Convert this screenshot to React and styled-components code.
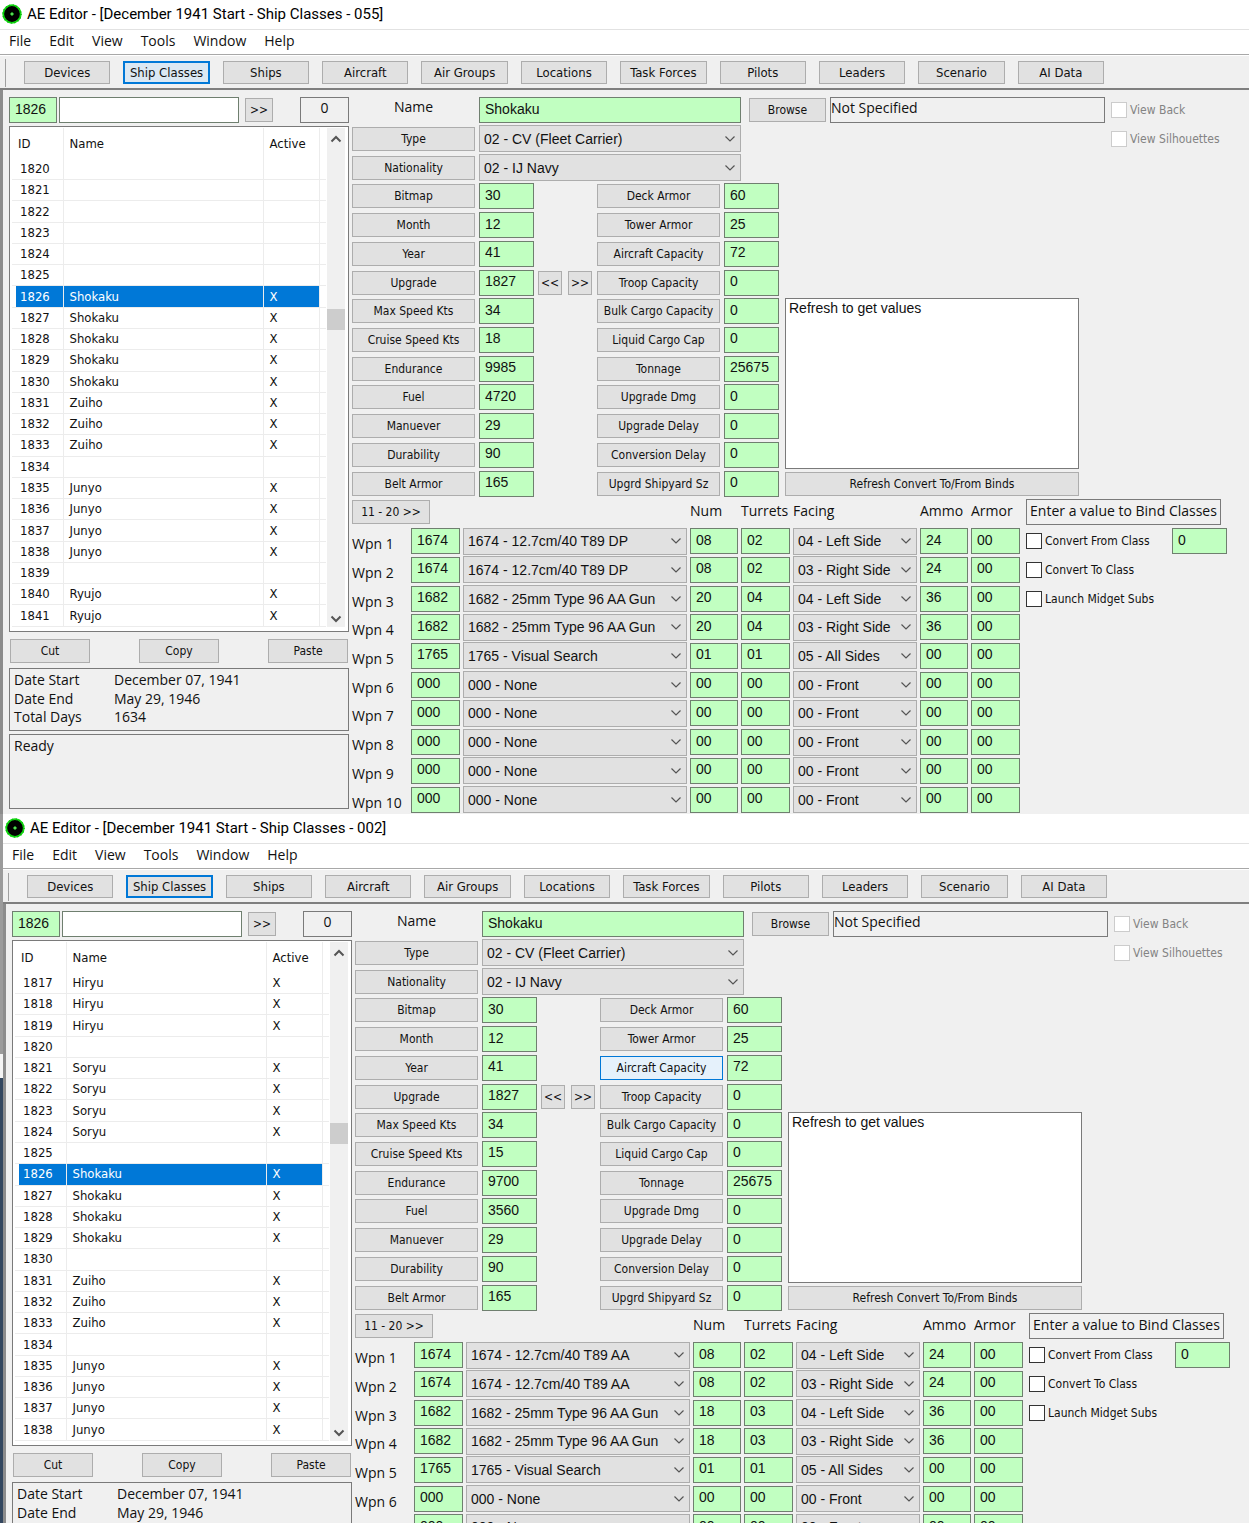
// ------------------------------
// File: App.jsx
// ------------------------------
// Description: Two scenario editor windows, stacked, each showing a ship class.
// ------------------------------

// ------------------------------
// Imports
// ------------------------------
import { Fragment, useId } from 'react';
import styled, { createGlobalStyle } from 'styled-components';

// ------------------------------
// Data
// ------------------------------
const menus = ['File', 'Edit', 'View', 'Tools', 'Window', 'Help'];

const tabs = [
  'Devices',
  'Ship Classes',
  'Ships',
  'Aircraft',
  'Air Groups',
  'Locations',
  'Task Forces',
  'Pilots',
  'Leaders',
  'Scenario',
  'AI Data',
];

// Builds the list rows from the first ID and the names that follow it.
function buildShips(firstId, names) {
  return names.map((name, index) => ({ id: firstId + index, name }));
}

const emptyWeapon = ['000', '000 - None', '00', '00', '00 - Front', '00', '00'];

function buildWeapons(gun, count, turrets) {
  return [
    ['1674', gun, '08', '02', '04 - Left Side', '24', '00'],
    ['1674', gun, '08', '02', '03 - Right Side', '24', '00'],
    ['1682', '1682 - 25mm Type 96 AA Gun', count, turrets, '04 - Left Side', '36', '00'],
    ['1682', '1682 - 25mm Type 96 AA Gun', count, turrets, '03 - Right Side', '36', '00'],
    ['1765', '1765 - Visual Search', '01', '01', '05 - All Sides', '00', '00'],
    emptyWeapon,
    emptyWeapon,
    emptyWeapon,
    emptyWeapon,
    emptyWeapon,
  ];
}

function buildStats(cruise, endurance, fuel) {
  return [
    ['Bitmap', '30', 'Deck Armor', '60'],
    ['Month', '12', 'Tower Armor', '25'],
    ['Year', '41', 'Aircraft Capacity', '72'],
    ['Upgrade', '1827', 'Troop Capacity', '0'],
    ['Max Speed Kts', '34', 'Bulk Cargo Capacity', '0'],
    ['Cruise Speed Kts', cruise, 'Liquid Cargo Cap', '0'],
    ['Endurance', endurance, 'Tonnage', '25675'],
    ['Fuel', fuel, 'Upgrade Dmg', '0'],
    ['Manuever', '29', 'Upgrade Delay', '0'],
    ['Durability', '90', 'Conversion Delay', '0'],
    ['Belt Armor', '165', 'Upgrd Shipyard Sz', '0'],
  ];
}

const first = {
  title: 'AE Editor - [December 1941 Start - Ship Classes - 055]',
  ships: buildShips(1820, [
    '', '', '', '', '', '',
    'Shokaku', 'Shokaku', 'Shokaku', 'Shokaku', 'Shokaku',
    'Zuiho', 'Zuiho', 'Zuiho', '',
    'Junyo', 'Junyo', 'Junyo', 'Junyo', '',
    'Ryujo', 'Ryujo',
  ]),
  stats: buildStats('18', '9985', '4720'),
  weapons: buildWeapons('1674 - 12.7cm/40 T89 DP', '20', '04'),
  tabHot: true,
};

const second = {
  title: 'AE Editor - [December 1941 Start - Ship Classes - 002]',
  ships: buildShips(1817, [
    'Hiryu', 'Hiryu', 'Hiryu', '',
    'Soryu', 'Soryu', 'Soryu', 'Soryu', '',
    'Shokaku', 'Shokaku', 'Shokaku', 'Shokaku', '',
    'Zuiho', 'Zuiho', 'Zuiho', '',
    'Junyo', 'Junyo', 'Junyo', 'Junyo',
  ]),
  stats: buildStats('15', '9700', '3560'),
  weapons: buildWeapons('1674 - 12.7cm/40 T89 AA', '18', '03'),
  hotButton: 'Aircraft Capacity',
};

// ------------------------------
// Styled Components
// ------------------------------
const GlobalStyle = createGlobalStyle`
  :root {
    --font-title: Roboto, 'Open Sans', sans-serif;
    --font-menu: 'Open Sans', 'Noto Sans', sans-serif;
    --font-ui: 'DejaVu Sans Condensed', 'DejaVu Sans', sans-serif;
    --font-field: 'Liberation Sans', Arial, sans-serif;
    --font-note: 'Comic Sans MS', 'Open Sans', sans-serif;
    --color-face: #f0f0f0;
    --color-button: #e1e1e1;
    --color-edge: #adadad;
    --color-frame: #7a7a7a;
    --color-field: #c1ffc1;
    --color-accent: #0078d7;
  }

  * {
    box-sizing: border-box;
  }

  body {
    margin: 0;
    background: #fff;
    color: #111;
  }

  button,
  input,
  select,
  textarea {
    margin: 0;
    border-radius: 0;
    color: inherit;
  }
`;

const Desktop = styled.div`
  display: flex;
  flex-direction: column;
  height: 100vh;
  overflow: hidden;
`;

const LowerRow = styled.div`
  display: flex;
  flex: 1;
  min-height: 0;
  overflow: hidden;
`;

const Backdrop = styled.div`
  flex: 0 0 3px;
  background: linear-gradient(
    #9b9b9b 240px,
    #f4f4f4 240px,
    #f4f4f4 264px,
    #33475f 264px
  );
`;

const StyledWindow = styled.section`
  flex: none;
  align-self: flex-start;
  width: 100%;
  min-width: 0;
  background: var(--color-face);

  ${LowerRow} & {
    flex: 1 1 0;
  }
`;

const TitleBar = styled.header`
  display: flex;
  align-items: center;
  gap: 5px;
  height: 29px;
  padding: 0 0 1px 2px;
  background: #fff;
  font: 15px/20px var(--font-title);
  color: #000;
`;

const Title = styled.h1`
  margin: 0;
  font: inherit;
  white-space: nowrap;
`;

const MenuBar = styled.nav`
  display: flex;
  align-items: center;
  gap: 18px;
  height: 26px;
  padding: 0 0 2px 9px;
  border-top: 1px solid #e2e2e2;
  border-bottom: 1px solid #a8a8a8;
  background: #fff;
`;

const MenuItem = styled.button`
  padding: 0;
  border: 0;
  background: none;
  font: 14px/18px var(--font-menu);
`;

const ToolBar = styled.div`
  display: flex;
  align-items: center;
  height: 35px;
  padding: 1px 0 0 5px;
  border-top: 1px solid #fff;
  border-bottom: 2px solid #7f7f7f;
`;

const Grip = styled.span`
  width: 1px;
  height: 28px;
  margin-right: 18px;
  background: #a0a0a0;
`;

const TabGrid = styled.div`
  display: grid;
  grid-template-columns: repeat(11, 1fr);
  gap: 13px;
  flex: 0 1 1080px;
`;

const Tab = styled.button`
  height: 23px;
  padding: 0;
  border: ${({ $active }) =>
    $active ? '2px solid var(--color-accent)' : '1px solid var(--color-edge)'};
  background: ${({ $hot }) => ($hot ? '#dbe8f3' : 'var(--color-button)')};
  font: 13px/16px var(--font-ui);
  white-space: nowrap;
`;

const Client = styled.div`
  display: flex;
  gap: 3px;
  padding: 6px 0 0 6px;
  border-left: 3px solid #8c8c8c;
`;

const Sidebar = styled.div`
  display: flex;
  flex-direction: column;
  flex: 0 0 340px;
  min-width: 0;
  padding: 1px 0 5px;
`;

const FindRow = styled.div`
  display: flex;
  align-items: center;
  gap: 2px;
  margin-bottom: 3px;
`;

const Button = styled.button`
  width: ${({ $width }) => ($width ? `${$width}px` : '100%')};
  height: 24px;
  padding: 0;
  border: 1px solid ${({ $hot }) => ($hot ? 'var(--color-accent)' : 'var(--color-edge)')};
  background: ${({ $hot }) => ($hot ? '#e5f1fb' : 'var(--color-button)')};
  font: 12px/16px var(--font-ui);
  white-space: nowrap;
`;

const FindButton = styled(Button)`
  margin: 0 auto 0 4px;
`;

const Field = styled.input`
  width: ${({ $width }) => ($width ? `${$width}px` : '100%')};
  height: 26px;
  padding: 0 5px 3px;
  border: 1px solid #6f7f6f;
  background: ${({ $plain }) => ($plain ? '#fff' : 'var(--color-field)')};
  font: 14px/18px var(--font-field);
`;

const Counter = styled.output`
  width: 49px;
  height: 26px;
  border: 1px solid var(--color-frame);
  font: 14px/20px var(--font-note);
  text-align: center;
`;

const ListBox = styled.div`
  display: flex;
  justify-content: space-between;
  height: 506px;
  padding: 1px 3px 4px 2px;
  border: 1px solid var(--color-frame);
  background: #fff;
`;

const ShipTable = styled.table`
  width: 314px;
  height: 499px;
  border-collapse: collapse;
  table-layout: fixed;
  font: 13px/16px var(--font-ui);

  th,
  td {
    padding: 0 0 0 6px;
    border-right: 1px solid #ececec;
    text-align: left;
    font-weight: normal;
  }

  th:last-child,
  td:last-child {
    border-right: 0;
  }
`;

const HeadRow = styled.tr`
  height: 31px;
`;

const ShipRow = styled.tr`
  border-bottom: 1px solid #ececec;

  td:not(:last-child) {
    background: ${({ $selected }) => ($selected ? 'var(--color-accent)' : 'none')};
    color: ${({ $selected }) => ($selected ? '#fff' : 'inherit')};
  }

  td:first-child {
    padding-left: 8px;
    background-image: linear-gradient(90deg, #fff 4px, transparent 4px);
  }
`;

const ScrollBar = styled.div`
  display: flex;
  flex-direction: column;
  align-items: center;
  justify-content: space-between;
  width: 18px;
  padding: 7px 0 4px;
  background: var(--color-face);
`;

const Thumb = styled.span`
  width: 18px;
  height: 21px;
  margin-bottom: 120px;
  background: #cdcdcd;
`;

const EditRow = styled.div`
  display: flex;
  justify-content: space-between;
  padding: 7px 1px 5px;
`;

const InfoBox = styled.dl`
  display: grid;
  grid-template-columns: 100px 1fr;
  grid-auto-rows: 1fr;
  height: 63px;
  margin: 0 0 3px;
  padding: 2px 4px 3px;
  border: 1px solid var(--color-frame);
  font: 14px/18px var(--font-note);

  dd {
    margin: 0;
  }
`;

const StatusBox = styled.div`
  height: 75px;
  padding: 2px 4px;
  border: 1px solid var(--color-frame);
  font: 14px/18px var(--font-note);
`;

const Form = styled.div`
  flex: 1;
  min-width: 0;
`;

const HeadGrid = styled.div`
  display: grid;
  grid-template-columns: 123px 262px 81px 275px auto;
  grid-template-rows: repeat(3, 1fr);
  column-gap: 4px;
  align-items: center;
  height: 86px;
`;

const NameLabel = styled.label`
  padding-bottom: 6px;
  text-align: center;
  font: 14px/18px var(--font-note);
`;

const BrowseButton = styled(Button)`
  justify-self: end;
`;

const PathBox = styled.output`
  height: 26px;
  border: 1px solid var(--color-frame);
  font: 14px/20px var(--font-note);
`;

const CheckLabel = styled.label`
  display: flex;
  grid-column: ${({ $column }) => $column || 'auto'};
  align-items: center;
  gap: 3px;
  padding-left: ${({ $column }) => ($column ? '2px' : 0)};
  color: ${({ $muted }) => ($muted ? '#838383' : 'inherit')};
  font: 12px/16px var(--font-ui);
  white-space: nowrap;
`;

const CheckBox = styled.input`
  appearance: none;
  width: 16px;
  height: 16px;
  border: 1px solid #333;
  background: #fff;

  &:disabled {
    border-color: #ccc;
  }

  &:checked {
    background: var(--color-accent);
  }
`;

const SelectCell = styled.div`
  display: grid;
  align-items: center;

  select,
  svg {
    grid-area: 1 / 1;
  }

  svg {
    justify-self: end;
    margin-right: 5px;
    pointer-events: none;
  }
`;

const StyledSelect = styled.select`
  appearance: none;
  width: 100%;
  height: 27px;
  padding: 0 20px 0 4px;
  border: 1px solid var(--color-edge);
  background: var(--color-button);
  font: 14px/18px var(--font-field);
`;

const StatArea = styled.div`
  display: flex;
  gap: 6px;
  height: 316px;
`;

const StatGrid = styled.div`
  display: grid;
  grid-template-columns: 123px 55px 55px 123px 55px;
  grid-template-rows: repeat(11, 1fr);
  column-gap: 4px;
  align-items: center;
`;

const ArrowPair = styled.div`
  display: flex;
  gap: 6px;
`;

const ConvertPanel = styled.div`
  display: flex;
  flex-direction: column;
  justify-content: flex-end;
  gap: 3px;
  width: 294px;
  padding-bottom: 2px;
`;

const ConvertText = styled.textarea`
  height: 171px;
  padding: 0 3px;
  border: 1px solid var(--color-frame);
  background: #fff;
  font: 14px/18px var(--font-field);
  resize: none;
`;

const WeaponArea = styled.div`
  display: flex;
  gap: 6px;
  height: 316px;
`;

const WeaponGrid = styled.div`
  display: grid;
  grid-template-columns: 56px 49px 224px 48px 49px 124px 48px 49px;
  grid-template-rows: repeat(11, 1fr);
  column-gap: 3px;
  align-items: center;
  font: 14px/18px var(--font-note);
  white-space: nowrap;
`;

const PageCell = styled.div`
  grid-column: 1 / 4;
`;

const ColumnName = styled.span`
  padding-bottom: 3px;
`;

const WeaponName = styled.span`
  padding-top: 6px;
`;

const BindGrid = styled.div`
  display: grid;
  grid-template-rows: repeat(11, 1fr);
  align-items: center;
  width: 201px;
`;

const BindTitle = styled.div`
  width: 195px;
  height: 26px;
  border: 1px solid var(--color-frame);
  font: 14px/22px var(--font-note);
  text-align: center;
  white-space: nowrap;
`;

const BindRow = styled.div`
  display: flex;
  align-items: center;
  justify-content: space-between;
`;

// ------------------------------
// Components
// ------------------------------
function Logo() {
  return (
    <svg width="20" height="20" viewBox="0 0 20 20" aria-hidden="true">
      <circle cx="10" cy="10" r="8.800" fill="#000" stroke="#12e012" strokeWidth="1.800" />
      <circle cx="10" cy="10" r="8.800" fill="none" stroke="#0cb00c" strokeWidth="1.800" strokeDasharray="1 2.500" />
      <circle cx="10" cy="10" r="1.300" fill="#b8ffb8" stroke="#18b818" />
    </svg>
  );
}

function Chevron({ up, bold }) {
  return (
    <svg width="12" height="8" viewBox="0 0 12 8" aria-hidden="true">
      <path
        d={up ? 'M1.500 6.500 6 2l4.500 4.500' : 'M1.500 1.500 6 6l4.500-4.500'}
        fill="none"
        stroke="#555"
        strokeWidth={bold ? 2 : 1.2}
      />
    </svg>
  );
}

function Select({ value, label }) {
  return (
    <SelectCell>
      <StyledSelect aria-label={label} defaultValue={value}>
        <option>{value}</option>
      </StyledSelect>
      <Chevron />
    </SelectCell>
  );
}

function Check({ children, disabled, column }) {
  return (
    <CheckLabel $muted={disabled} $column={column}>
      <CheckBox type="checkbox" disabled={disabled} />
      {children}
    </CheckLabel>
  );
}

function ShipList({ ships }) {
  return (
    <ListBox>
      <ShipTable>
        <colgroup>
          <col width="51" />
          <col width="200" />
          <col width="56" />
          <col width="7" />
        </colgroup>
        <thead>
          <HeadRow>
            <th>ID</th>
            <th>Name</th>
            <th>Active</th>
            <th aria-hidden="true" />
          </HeadRow>
        </thead>
        <tbody>
          {ships.map(({ id, name }) => (
            <ShipRow key={id} $selected={id === 1826}>
              <td>{id}</td>
              <td>{name}</td>
              <td>{name && 'X'}</td>
              <td />
            </ShipRow>
          ))}
        </tbody>
      </ShipTable>
      <ScrollBar>
        <Chevron up bold />
        <Thumb />
        <Chevron bold />
      </ScrollBar>
    </ListBox>
  );
}

function SidePanel({ ships }) {
  return (
    <Sidebar>
      <FindRow>
        <Field $width={48} aria-label="Class ID" defaultValue="1826" />
        <Field $width={180} $plain aria-label="Find" />
        <FindButton $width={28}>&gt;&gt;</FindButton>
        <Counter>0</Counter>
      </FindRow>
      <ShipList ships={ships} />
      <EditRow>
        <Button $width={80}>Cut</Button>
        <Button $width={80}>Copy</Button>
        <Button $width={80}>Paste</Button>
      </EditRow>
      <InfoBox>
        <dt>Date Start</dt>
        <dd>December 07, 1941</dd>
        <dt>Date End</dt>
        <dd>May 29, 1946</dd>
        <dt>Total Days</dt>
        <dd>1634</dd>
      </InfoBox>
      <StatusBox>Ready</StatusBox>
    </Sidebar>
  );
}

function Stats({ stats, hotButton }) {
  return (
    <StatArea>
      <StatGrid>
        {stats.map(([left, leftValue, right, rightValue]) => (
          <Fragment key={left}>
            <Button>{left}</Button>
            <Field aria-label={left} defaultValue={leftValue} />
            <ArrowPair>
              {left === 'Upgrade' && (
                <>
                  <Button $width={24}>&lt;&lt;</Button>
                  <Button $width={24}>&gt;&gt;</Button>
                </>
              )}
            </ArrowPair>
            <Button $hot={right === hotButton}>{right}</Button>
            <Field aria-label={right} defaultValue={rightValue} />
          </Fragment>
        ))}
      </StatGrid>
      <ConvertPanel>
        <ConvertText aria-label="Convert binds" defaultValue="Refresh to get values" />
        <Button>Refresh Convert To/From Binds</Button>
      </ConvertPanel>
    </StatArea>
  );
}

function Weapons({ weapons }) {
  return (
    <WeaponArea>
      <WeaponGrid>
        <PageCell>
          <Button $width={78}>11 - 20 &gt;&gt;</Button>
        </PageCell>
        <ColumnName>Num</ColumnName>
        <ColumnName>Turrets</ColumnName>
        <ColumnName>Facing</ColumnName>
        <ColumnName>Ammo</ColumnName>
        <ColumnName>Armor</ColumnName>
        {weapons.map(([id, device, num, turrets, facing, ammo, armor], index) => {
          const name = `Wpn ${index + 1}`;
          return (
            <Fragment key={name}>
              <WeaponName>{name}</WeaponName>
              <Field aria-label={`${name} ID`} defaultValue={id} />
              <Select label={`${name} device`} value={device} />
              <Field aria-label={`${name} num`} defaultValue={num} />
              <Field aria-label={`${name} turrets`} defaultValue={turrets} />
              <Select label={`${name} facing`} value={facing} />
              <Field aria-label={`${name} ammo`} defaultValue={ammo} />
              <Field aria-label={`${name} armor`} defaultValue={armor} />
            </Fragment>
          );
        })}
      </WeaponGrid>
      <BindGrid>
        <BindTitle>Enter a value to Bind Classes</BindTitle>
        <BindRow>
          <Check>Convert From Class</Check>
          <Field $width={55} aria-label="Bind class" defaultValue="0" />
        </BindRow>
        <Check>Convert To Class</Check>
        <Check>Launch Midget Subs</Check>
      </BindGrid>
    </WeaponArea>
  );
}

function EditorWindow({ title, ships, stats, weapons, tabHot, hotButton }) {
  const nameId = useId();

  return (
    <StyledWindow>
      <TitleBar>
        <Logo />
        <Title>{title}</Title>
      </TitleBar>
      <MenuBar>
        {menus.map((menu) => (
          <MenuItem key={menu}>{menu}</MenuItem>
        ))}
      </MenuBar>
      <ToolBar>
        <Grip />
        <TabGrid>
          {tabs.map((tab) => (
            <Tab
              key={tab}
              $active={tab === 'Ship Classes'}
              $hot={tabHot && tab === 'Ship Classes'}
            >
              {tab}
            </Tab>
          ))}
        </TabGrid>
      </ToolBar>
      <Client>
        <SidePanel ships={ships} />
        <Form>
          <HeadGrid>
            <NameLabel htmlFor={nameId}>Name</NameLabel>
            <Field id={nameId} defaultValue="Shokaku" />
            <BrowseButton $width={77}>Browse</BrowseButton>
            <PathBox>Not Specified</PathBox>
            <Check disabled column={5}>View Back</Check>
            <Button>Type</Button>
            <Select label="Type" value="02 - CV (Fleet Carrier)" />
            <Check disabled column={5}>View Silhouettes</Check>
            <Button>Nationality</Button>
            <Select label="Nationality" value="02 - IJ Navy" />
          </HeadGrid>
          <Stats stats={stats} hotButton={hotButton} />
          <Weapons weapons={weapons} />
        </Form>
      </Client>
    </StyledWindow>
  );
}

function App() {
  return (
    <>
      <GlobalStyle />
      <Desktop>
        <EditorWindow {...first} />
        <LowerRow>
          <Backdrop />
          <EditorWindow {...second} />
        </LowerRow>
      </Desktop>
    </>
  );
}

export default App;
